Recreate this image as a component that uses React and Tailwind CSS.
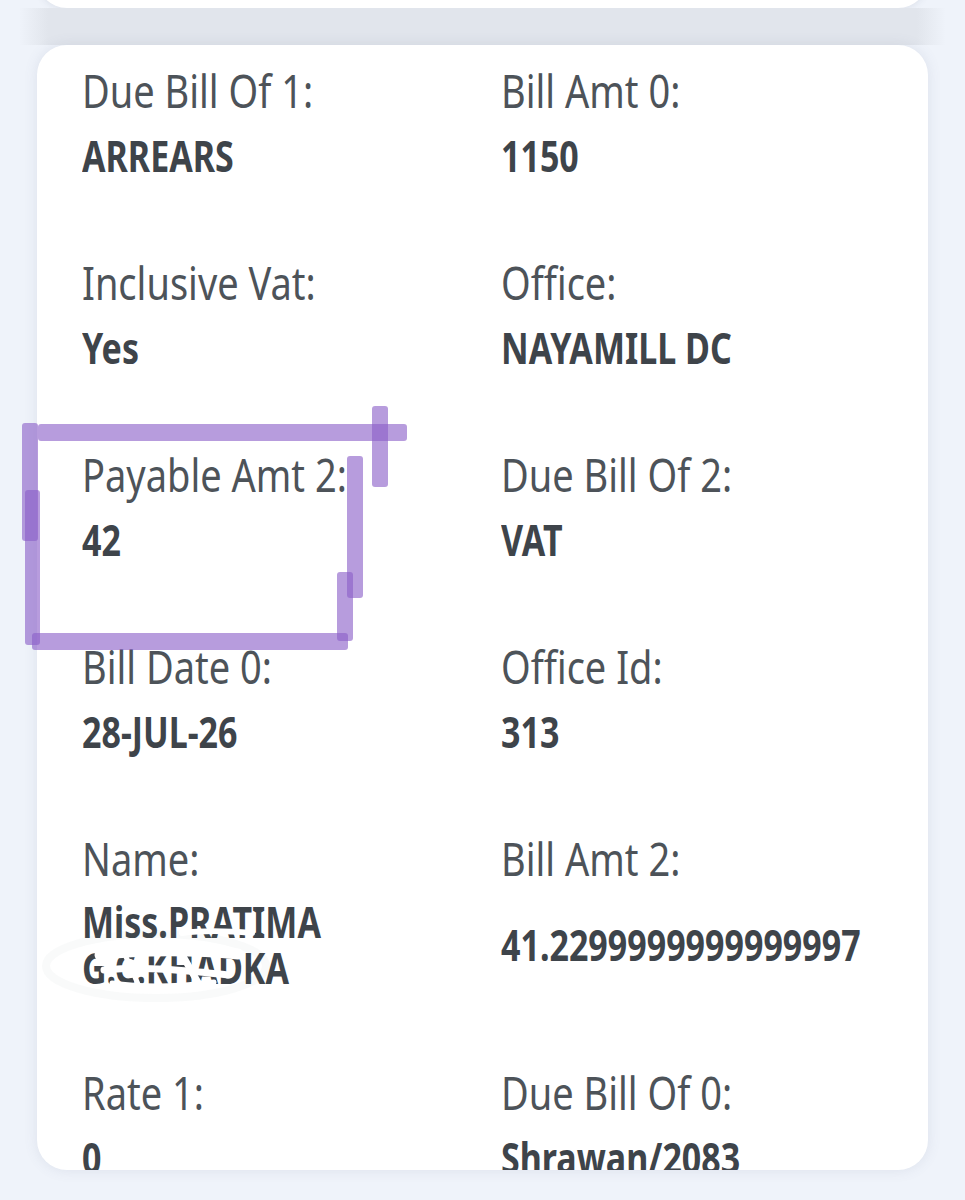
import React from "react";

const rows = [
  [["Due Bill Of 1:", "ARREARS"], ["Bill Amt 0:", "1150"]],
  [["Inclusive Vat:", "Yes"], ["Office:", "NAYAMILL DC"]],
  [["Payable Amt 2:", "42"], ["Due Bill Of 2:", "VAT"]],
  [["Bill Date 0:", "28-JUL-26"], ["Office Id:", "313"]],
  [["Name:", "Miss.PRATIMA G.C.KHADKA", true], ["Bill Amt 2:", "41.2299999999999997"]],
  [["Rate 1:", "0"], ["Due Bill Of 0:", "Shrawan/2083"]],
];

function Cell({ label, value, tall }) {
  return (
    <div className="flex flex-col">
      <div className="text-[38px] leading-[49px] text-[#4d5359] whitespace-nowrap scale-y-[1.2]">{label}</div>
      <div className={"mt-[22px] flex-1 flex items-center" + (tall ? " py-[3px]" : "")}>
        <div className="text-[34px] leading-[36px] font-bold text-[#3e444a] scale-y-[1.28]">{value}</div>
      </div>
    </div>
  );
}

export default function App() {
  const p = "rgba(138,96,200,0.62)";
  return (
    <div className="relative w-[965px] h-[1200px] overflow-hidden bg-[#eff3fa] font-['Noto_Sans',sans-serif]">
      <div className="px-[37px]">
        <div className="mt-[-32px] h-[40px] bg-white rounded-b-[30px] shadow-[0_2px_6px_rgba(90,100,120,0.10)]" />
      </div>
      <div className="h-[37px] bg-[linear-gradient(to_right,#eff3fa,#eff3fa_2%,#e1e5ec_5%,#e1e5ec_95%,#eff3fa_98%,#eff3fa)]" />
      <div className="px-[37px]">
        <div className="h-[1125px] bg-white rounded-[30px] overflow-hidden px-[45px] pt-[21px] shadow-[0_0_14px_rgba(90,100,130,0.12)]">
          <div className="grid grid-cols-[382px_1fr] gap-x-[37px] gap-y-[85px]">
            {rows.map((r, i) => (
              <React.Fragment key={i}>
                <Cell label={r[0][0]} value={r[0][1]} tall={r[0][2]} />
                <Cell label={r[1][0]} value={r[1][1]} />
              </React.Fragment>
            ))}
          </div>
        </div>
      </div>

      <svg className="absolute left-0 top-0 pointer-events-none" width="965" height="1200" viewBox="0 0 965 1200">
        {/* redaction scribble */}
        <ellipse cx="156" cy="966" rx="110" ry="32" fill="none" stroke="rgba(120,130,140,0.045)" strokeWidth="8" />
        <g stroke="#ffffff" strokeLinecap="round" fill="none">
          <path d="M182 933 C205 930 230 931 252 933" strokeWidth="6" />
          <path d="M100 955 C140 949 200 950 238 954" strokeWidth="11" />
          <path d="M104 970 C150 966 190 971 228 975" strokeWidth="7" />
          <path d="M112 983 C140 987 180 987 214 982" strokeWidth="5" />
          <path d="M176 944 L200 986" strokeWidth="7" />
          <path d="M122 948 L138 984" strokeWidth="5" />
        </g>
        {/* purple annotation */}
        <g fill={p}>
          <rect x="38" y="424" width="369" height="17" rx="3" />
          <rect x="372" y="406" width="16" height="81" rx="3" />
          <rect x="22" y="423" width="16" height="118" rx="3" />
          <rect x="25" y="490" width="15" height="155" rx="3" />
          <rect x="347" y="456" width="16" height="142" rx="3" />
          <rect x="337" y="572" width="16" height="69" rx="3" />
          <rect x="32" y="633" width="316" height="17" rx="3" />
        </g>
      </svg>
    </div>
  );
}
